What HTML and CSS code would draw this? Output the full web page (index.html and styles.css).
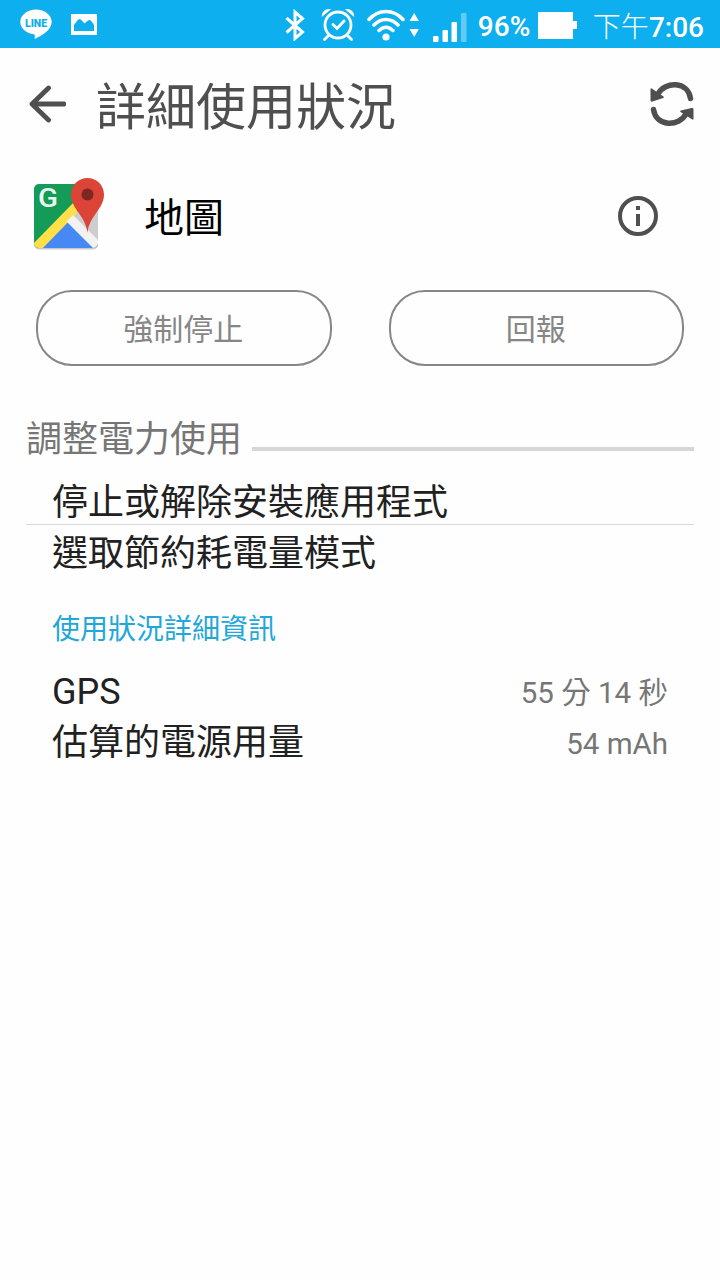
FILE: index.html
```html
<!DOCTYPE html>
<html lang="zh-Hant">

<head>
    <meta charset="UTF-8">
    <meta name="viewport" content="width=device-width, initial-scale=1.0">
    <title>詳細使用狀況</title>
    <link rel="stylesheet" href="styles.css">
</head>

<body>
    <div class="status-bar">
        <div class="notifications">
            <svg class="icon-line" width="32" height="32" viewBox="0 0 32 32">
                <path d="M16 1.500C7.300 1.500 .3 7 .3 14c0 6.200 5.700 11.200 13.300 12.200 1.500.3 1.400 1.200 1 4.800C21 28 31.700 22.500 31.700 14c0-7-7-12.500-15.700-12.500z" fill="#fff"/>
                <text x="16" y="18.500" text-anchor="middle" textLength="22" lengthAdjust="spacingAndGlyphs">LINE</text>
            </svg>
            <svg width="26" height="21" viewBox="0 0 26 21">
                <rect width="26" height="21" fill="#fff"/>
                <path d="M3 17V11q4-6 5.500-6t5 4.500Q17 6 18.500 6t4.500 5v6z" fill="#0dafee"/>
            </svg>
        </div>
        <div class="system">
            <svg class="bluetooth" width="20" height="32" viewBox="0 0 20 32" fill="none" stroke="#fff" stroke-width="3">
                <path d="M1.500 9l16 14-7.500 6.500V3l7.500 6.500-16 14"/>
            </svg>
            <svg class="alarm" width="34" height="34" viewBox="0 0 34 34" fill="none" stroke="#fff" stroke-width="2.800" stroke-linecap="round">
                <circle cx="17" cy="18" r="13"/>
                <path d="M12 17.500l4 4 7-7.500M7.500 28.500l-4 4M26.500 28.500l4 4"/>
                <path d="M.8 10C.5 4.500 5 1 10 2.300zM33.200 10C33.500 4.500 29 1 24 2.300z" fill="#fff" stroke="none"/>
            </svg>
            <svg class="wifi" width="52" height="34" viewBox="0 0 52 34" fill="none" stroke="#fff" stroke-width="3.500" stroke-linecap="round">
                <path d="M2 12.500C11.500 1.800 26.500 1.800 36 12.500M7 18c7-7.500 17-7.500 24 0M12 23.500c4.500-4.500 9.500-4.500 14 0"/>
                <circle cx="19" cy="30" r="3.600" fill="#fff" stroke="none"/>
                <path d="M42.500 14l4.700-8 4.700 8zM42.500 22h9.400l-4.700 8z" fill="#fff" stroke="none"/>
            </svg>
            <svg class="signal" width="34" height="30" viewBox="0 0 34 30" fill="#fff">
                <rect x="0" y="23" width="5.500" height="6" rx="1"/>
                <rect x="9.500" y="17" width="5.500" height="12" rx="1"/>
                <rect x="18.500" y="9" width="5.500" height="20" rx="1"/>
                <rect x="28" y="0" width="5.500" height="29" rx="1" opacity=".35"/>
            </svg>
            <span class="percent">96%</span>
            <svg class="battery" width="39" height="27" viewBox="0 0 39 27">
                <path d="M0 0h35v9h4v8h-4v10H0z" fill="#fff"/>
            </svg>
            <span class="clock">下午<b>7:06</b></span>
        </div>
    </div>

    <div class="header">
        <svg class="back" width="38" height="38" viewBox="0 0 38 38" fill="none" stroke="#4f4f4f" stroke-width="4.800" stroke-linecap="round" stroke-linejoin="round">
            <path d="M20.500 3L4 19l16.500 16M4.500 19h31.500"/>
        </svg>
        <h1>詳細使用狀況</h1>
        <svg class="refresh" width="44" height="44" viewBox="0 0 44 44">
            <path d="M8 12C15-1 38-1 40.500 16.500M3.500 27.500C6 45 29 45 36 32" fill="none" stroke="#4f4f4f" stroke-width="5.400" stroke-linecap="round"/>
            <path d="M.5 7.500q0-2 1.600-.8L13.500 14.500q1 1-.3 1.500L2.500 19.500q-2 .5-2-1zM43.500 36.500q0 2-1.600.8L30.500 30q-1-1 .3-1.500L41.500 26q2-.5 2 1z" fill="#4f4f4f"/>
        </svg>
    </div>

    <div class="app">
        <svg class="app-icon" width="72" height="76" viewBox="0 0 72 76">
            <defs>
                <clipPath id="tile">
                    <rect x="1" y="6" width="64" height="64" rx="5"/>
                </clipPath>
            </defs>
            <rect x="1" y="7.500" width="64" height="64" rx="5" fill="#c9c9c9"/>
            <g clip-path="url(#tile)">
                <rect x="1" y="6" width="64" height="64" fill="#149b57"/>
                <path d="M66 12L34 43l32 28z" fill="#cdcdcd"/>
                <path d="M33 41L5 72h58z" fill="#4688f4"/>
                <path d="M-3 69L44 21v14L6 74z" fill="#ffe047"/>
                <path d="M33.500 43.500l6.500-6.500 27 27-6 7z" fill="#f2f2f2"/>
            </g>
            <text x="5" y="29" textLength="20" lengthAdjust="spacingAndGlyphs">G</text>
            <path d="M54.500 55C53 38 38 31 38 16.500a16.500 16.500 0 0 1 33 0C71 31 56 38 54.500 55z" fill="#dc4437"/>
            <circle cx="54.500" cy="16.500" r="6" fill="#7b2722"/>
        </svg>
        <span class="app-name">地圖</span>
        <svg class="info" width="40" height="40" viewBox="0 0 40 40">
            <circle cx="20" cy="20" r="18" fill="none" stroke="#4f4f4f" stroke-width="4"/>
            <path d="M18 10h4v4h-4zM18 18h4v12h-4z" fill="#4f4f4f"/>
        </svg>
    </div>

    <div class="buttons">
        <button>強制停止</button>
        <button>回報</button>
    </div>

    <div class="section-title">
        <h2>調整電力使用</h2>
        <div class="line"></div>
    </div>

    <div class="options">
        <div class="option">停止或解除安裝應用程式</div>
        <div class="option">選取節約耗電量模式</div>
    </div>

    <h3>使用狀況詳細資訊</h3>
    <div class="details">
        <div class="detail">
            <span>GPS</span>
            <span class="value">55 分 14 秒</span>
        </div>
        <div class="detail">
            <span>估算的電源用量</span>
            <span class="value">54 mAh</span>
        </div>
    </div>
</body>

</html>
```
FILE: styles.css
```css
* {
    box-sizing: border-box;
}

body {
    margin: 0;
    min-height: 1280px;
    background-color: #fefefe;
    color: #212121;
    font-family: Roboto, "Noto Sans CJK TC", sans-serif;
}

h1, h2, h3 {
    margin: 0;
    font-weight: 400;
}

svg {
    display: block;
    flex-shrink: 0;
}

.status-bar {
    display: flex;
    justify-content: space-between;
    height: 48px;
    padding: 0 16px 0 20px;
    background-color: #0dafee;
    color: #fff;
}

.notifications,
.system {
    display: flex;
    align-items: center;
}

.notifications {
    gap: 19px;
}

.icon-line text {
    font: 900 10px Roboto, sans-serif;
    fill: #0dafee;
}

.bluetooth {
    margin-top: 2px;
}

.alarm {
    margin-left: 16px;
}

.wifi {
    margin-left: 12px;
}

.signal {
    margin: 7px 0 0 14px;
}

.percent {
    width: 52px;
    margin: 6px 0 0 11px;
    font-size: 28px;
    font-weight: 500;
    line-height: 40px;
    white-space: nowrap;
}

.battery {
    margin: 3px 16px 0 8px;
}

.clock {
    margin-top: 7px;
    font-size: 28px;
    font-weight: 300;
    line-height: 40px;
    white-space: nowrap;
}

.clock b {
    font-weight: 500;
}

.header {
    display: flex;
    align-items: center;
    height: 112px;
    padding: 0 26px 0 28px;
}

h1 {
    flex: 1;
    margin-left: 30px;
    padding-top: 7px;
    font-size: 50px;
    line-height: 70px;
    color: #4f4f4f;
}

.app {
    display: flex;
    align-items: center;
    height: 112px;
    padding: 0 62px 0 33px;
}

.app-icon text {
    font: 500 26px Roboto, sans-serif;
    fill: #e9f6ef;
}

.app-name {
    flex: 1;
    margin-left: 39px;
    padding-top: 5px;
    font-size: 40px;
    line-height: 60px;
    color: #000;
}

.buttons {
    display: flex;
    gap: 57px;
    margin: 18px 36px 0;
}

button {
    flex: 1;
    height: 76px;
    padding: 0 1px 3px 0;
    border: 2px solid #868686;
    border-radius: 36px;
    background: none;
    color: #868686;
    font-family: inherit;
    font-size: 30px;
}

.section-title {
    display: flex;
    align-items: center;
    gap: 10px;
    margin: 44px 26px 0;
    height: 54px;
}

h2 {
    padding-top: 5px;
    font-size: 36px;
    line-height: 54px;
    color: #767676;
}

.line {
    flex: 1;
    height: 4px;
    margin-top: 23px;
    background-color: #d6d7d9;
}

.options {
    margin: 11px 26px 0;
}

.option {
    height: 50px;
    padding-left: 26px;
    font-size: 36px;
    line-height: 57px;
}

.option:first-child {
    border-bottom: 1px solid #dadada;
}

.option:last-child {
    line-height: 59px;
}

h3 {
    margin: 30px 52px 0;
    font-size: 28px;
    line-height: 50px;
    color: #22a7d9;
}

.details {
    margin: 12px 52px 0;
}

.detail {
    display: flex;
    justify-content: space-between;
    height: 51px;
    font-size: 36px;
    line-height: 51px;
}

.value {
    padding-top: 1px;
    font-size: 29.5px;
    color: #767676;
}
```
